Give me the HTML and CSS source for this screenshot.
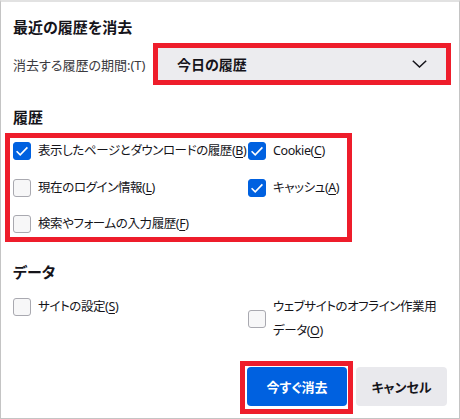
FILE: index.html
```html
<!DOCTYPE html>
<html lang="ja">

<head>
    <meta charset="UTF-8">
    <meta name="viewport" content="width=device-width, initial-scale=1.0">
    <title>最近の履歴を消去</title>
    <link rel="stylesheet" href="styles.css">
</head>

<body>

    <div class="dialog">
        <h1 class="title">最近の履歴を消去</h1>

        <div class="period">
            <span class="periodLabel">消去する履歴の期間:(T)</span>
            <div class="mark periodMark">
                <div class="select">
                    <span>今日の履歴</span>
                    <svg width="15" height="8" viewBox="0 0 15 8">
                        <polyline points="0.8,0.8 7.5,7 14.2,0.8" fill="none" stroke="#15141a" stroke-width="1.5" />
                    </svg>
                </div>
            </div>
        </div>

        <h2 class="heading headingHistory">履歴</h2>
        <div class="mark historyMark">
            <div class="options optionsHistory">
                <label class="option">
                    <span class="box checked"><svg width="18" height="18" viewBox="0 0 18 18"><polyline points="3.6,9.2 7.2,12.8 14.4,5.4" fill="none" stroke="#fff" stroke-width="1.6" /></svg></span>
                    <span class="text">表示したページとダウンロードの履歴(<u>B</u>)</span>
                </label>
                <label class="option">
                    <span class="box checked"><svg width="18" height="18" viewBox="0 0 18 18"><polyline points="3.6,9.2 7.2,12.8 14.4,5.4" fill="none" stroke="#fff" stroke-width="1.6" /></svg></span>
                    <span class="text">Cookie(<u>C</u>)</span>
                </label>
                <label class="option">
                    <span class="box"></span>
                    <span class="text">現在のログイン情報(<u>L</u>)</span>
                </label>
                <label class="option">
                    <span class="box checked"><svg width="18" height="18" viewBox="0 0 18 18"><polyline points="3.6,9.2 7.2,12.8 14.4,5.4" fill="none" stroke="#fff" stroke-width="1.6" /></svg></span>
                    <span class="text">キャッシュ(<u>A</u>)</span>
                </label>
                <label class="option">
                    <span class="box"></span>
                    <span class="text">検索やフォームの入力履歴(<u>F</u>)</span>
                </label>
            </div>
        </div>

        <h2 class="heading headingData">データ</h2>
        <div class="options optionsData">
            <label class="option">
                <span class="box"></span>
                <span class="text">サイトの設定(<u>S</u>)</span>
            </label>
            <label class="option">
                <span class="box"></span>
                <span class="wrapText">ウェブサイトのオフライン作業用<br>データ(<u>O</u>)</span>
            </label>
        </div>

        <div class="footer">
            <div class="mark buttonMark">
                <button class="button buttonPrimary">今すぐ消去</button>
            </div>
            <button class="button buttonCancel">キャンセル</button>
        </div>
    </div>

</body>

</html>
```

FILE: styles.css
```css
body {
    margin: 0;
    background: #ffffff;
    font-family: "Noto Sans", "Noto Sans CJK JP", sans-serif;
    font-feature-settings: "palt";
    color: #15141a;
}

.dialog {
    box-sizing: border-box;
    width: 460px;
    height: 419px;
    overflow: hidden;
    border: 1px solid #c4c4c4;
    border-top: 2px solid #e2e2e2;
    padding: 15px 12px 0;
}

.title {
    margin: 0;
    font-size: 15px;
    line-height: 20px;
    font-weight: 700;
}

.mark {
    box-sizing: border-box;
    border: 5px solid #ee1d2b;
}

.period {
    display: flex;
    align-items: center;
    margin-top: 6px;
    font-size: 13px;
}

.periodLabel {
    color: #3b3a40;
    white-space: nowrap;
}

.periodMark {
    width: 298px;
    margin-left: auto;
    margin-right: -4px;
}

.select {
    display: flex;
    align-items: center;
    justify-content: space-between;
    height: 32px;
    padding: 0 19px;
    background: #ececef;
    font-size: 14px;
    font-weight: 700;
}

.heading {
    margin: 0;
    font-size: 15px;
    line-height: 20px;
    font-weight: 700;
}

.headingHistory {
    margin-top: 22px;
}

.headingData {
    margin-top: 20px;
}

.historyMark {
    width: 347px;
    margin: 6px 0 0 -8px;
    padding-left: 3px;
}

.options {
    display: grid;
    grid-template-columns: 235px auto;
    font-size: 12.5px;
    letter-spacing: -0.4px;
}

.optionsHistory {
    row-gap: 10.5px;
}

.optionsData {
    margin-top: 13px;
    align-items: start;
}

.option {
    display: flex;
    align-items: center;
    gap: 7px;
    min-height: 26px;
    line-height: 24px;
}

.optionsData .option {
    min-height: 24px;
}

.text,
.wrapText {
    white-space: nowrap;
}

.option u {
    text-underline-offset: 2px;
}

.box {
    box-sizing: border-box;
    flex: none;
    width: 18px;
    height: 18px;
    border: 1px solid #a9a9b0;
    border-radius: 3px;
    background: #f7f7f8;
}

.box svg {
    display: block;
    margin: -1px;
}

.box.checked {
    border-color: #0061e0;
    background: #0061e0;
}

.footer {
    display: flex;
    justify-content: flex-end;
    align-items: flex-start;
    gap: 3px;
    margin-top: 18px;
}

.buttonMark {
    padding: 1px 1px 3px 2px;
}

.button {
    height: 39px;
    border: none;
    border-radius: 4px;
    font-family: inherit;
    font-feature-settings: "palt";
    font-size: 13px;
    font-weight: 700;
}

.buttonPrimary {
    display: block;
    width: 100px;
    background: #0061e0;
    color: #ffffff;
}

.buttonCancel {
    width: 91px;
    margin-top: 6px;
    background: #e9e9ed;
    color: #15141a;
}
```
